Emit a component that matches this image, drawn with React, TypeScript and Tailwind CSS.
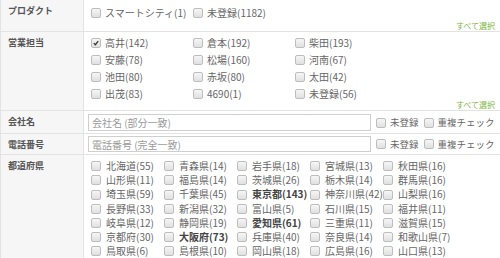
import { ReactNode } from 'react';

type Item = { label: string; checked?: boolean; bold?: boolean };

const products: Item[] = [{ label: 'スマートシティ(1)' }, { label: '未登録(1182)' }];

const sales: Item[] = [
  { label: '高井(142)', checked: true },
  { label: '倉本(192)' },
  { label: '柴田(193)' },
  { label: '安藤(78)' },
  { label: '松場(160)' },
  { label: '河南(67)' },
  { label: '池田(80)' },
  { label: '赤坂(80)' },
  { label: '太田(42)' },
  { label: '出茂(83)' },
  { label: '4690(1)' },
  { label: '未登録(56)' },
];

const prefs: Item[] = [
  { label: '北海道(55)' }, { label: '青森県(14)' }, { label: '岩手県(18)' }, { label: '宮城県(13)' }, { label: '秋田県(16)' },
  { label: '山形県(11)' }, { label: '福島県(14)' }, { label: '茨城県(26)' }, { label: '栃木県(14)' }, { label: '群馬県(16)' },
  { label: '埼玉県(59)' }, { label: '千葉県(45)' }, { label: '東京都(143)', bold: true }, { label: '神奈川県(42)' }, { label: '山梨県(16)' },
  { label: '長野県(33)' }, { label: '新潟県(32)' }, { label: '富山県(5)' }, { label: '石川県(15)' }, { label: '福井県(11)' },
  { label: '岐阜県(12)' }, { label: '静岡県(19)' }, { label: '愛知県(61)', bold: true }, { label: '三重県(11)' }, { label: '滋賀県(15)' },
  { label: '京都府(30)' }, { label: '大阪府(73)', bold: true }, { label: '兵庫県(40)' }, { label: '奈良県(14)' }, { label: '和歌山県(7)' },
  { label: '鳥取県(6)' }, { label: '島根県(10)' }, { label: '岡山県(18)' }, { label: '広島県(16)' }, { label: '山口県(13)' },
];

function Box({ checked }: { checked?: boolean }) {
  return (
    <span className="relative inline-block w-[10px] h-[10px] shrink-0 rounded-[2px] border border-[#bdbdbd] bg-gradient-to-b from-[#f6f6f6] to-[#e0e0e0]">
      {checked && (
        <svg viewBox="0 0 10 10" className="absolute inset-0 w-full h-full">
          <path d="M2.2 5.2 L4.2 7.2 L7.8 2.6" fill="none" stroke="#333" strokeWidth="1.6" />
        </svg>
      )}
    </span>
  );
}

function Check({ item, gap = 'gap-[4px]' }: { item: Item; gap?: string }) {
  return (
    <label className={`flex shrink-0 items-center ${gap} whitespace-nowrap`}>
      <Box checked={item.checked} />
      <span className={item.bold ? 'font-bold text-[#444]' : ''}>{item.label}</span>
    </label>
  );
}

function Row({ label, children, last }: { label: string; children: ReactNode; last?: boolean }) {
  return (
    <div className={`flex ${last ? '' : 'border-b border-[#e3e3e3]'}`}>
      <div className="w-[83px] shrink-0 bg-[#f6f6f6] border-r border-[#e3e3e3] pl-[7px] pt-[5px] text-[9px] leading-[12px] font-bold text-[#555]">
        {label}
      </div>
      <div className="flex-1 min-w-0 pl-[7px] pr-[5px]">{children}</div>
    </div>
  );
}

function SelectAll() {
  return <div className="text-right text-[8px] leading-[10px] text-[#7cb342]">すべて選択</div>;
}

function TextRow({ placeholder, h }: { placeholder: string; h: string }) {
  return (
    <div className="flex items-center whitespace-nowrap">
      <input
        placeholder={placeholder}
        className={`w-[283px] ${h} shrink-0 -ml-[3px] border border-[#cfcfcf] bg-white px-[3px] text-[10px] text-[#666] placeholder:text-[#999] outline-none`}
      />
      {/* 未登録 / 重複チェック */}
      <div className="ml-[5px] flex shrink-0 items-center gap-[5px] text-[9.5px]">
        <Check item={{ label: '未登録' }} gap="gap-[4px]" />
        <Check item={{ label: '重複チェック' }} gap="gap-[4px]" />
      </div>
    </div>
  );
}

export default function App() {
  return (
    <div className="w-[500px] overflow-hidden bg-white border-l border-[#e3e3e3] text-[10px] text-[#666] font-['Noto_Sans_CJK_JP','Noto_Sans',sans-serif]">
      <Row label="プロダクト">
        <div className="pt-[6px] grid grid-cols-[102px_102px] leading-[14px]">
          {products.map(p => (
            <Check key={p.label} item={p} />
          ))}
        </div>
        <div className="mt-[1px]">
          <SelectAll />
        </div>
      </Row>

      <Row label="営業担当">
        <div className="pt-[2px] grid grid-cols-[102px_102px_102px] leading-[17px]">
          {sales.map(s => (
            <Check key={s.label} item={s} />
          ))}
        </div>
        <div className="-mt-[2px]">
          <SelectAll />
        </div>
      </Row>

      <Row label="会社名">
        <div className="pt-[3px] pb-[2px]">
          <TextRow placeholder="会社名 (部分一致)" h="h-[17px]" />
        </div>
      </Row>

      <Row label="電話番号">
        <div className="pt-[2px] pb-[2px]">
          <TextRow placeholder="電話番号 (完全一致)" h="h-[16px]" />
        </div>
      </Row>

      <Row label="都道府県" last>
        <div className="pt-[4px] pb-[4px] grid grid-cols-[73px_73px_73px_73px_73px] leading-[14.2px]">
          {prefs.map(p => (
            <Check key={p.label} item={p} gap="gap-[5px]" />
          ))}
        </div>
      </Row>
    </div>
  );
}
